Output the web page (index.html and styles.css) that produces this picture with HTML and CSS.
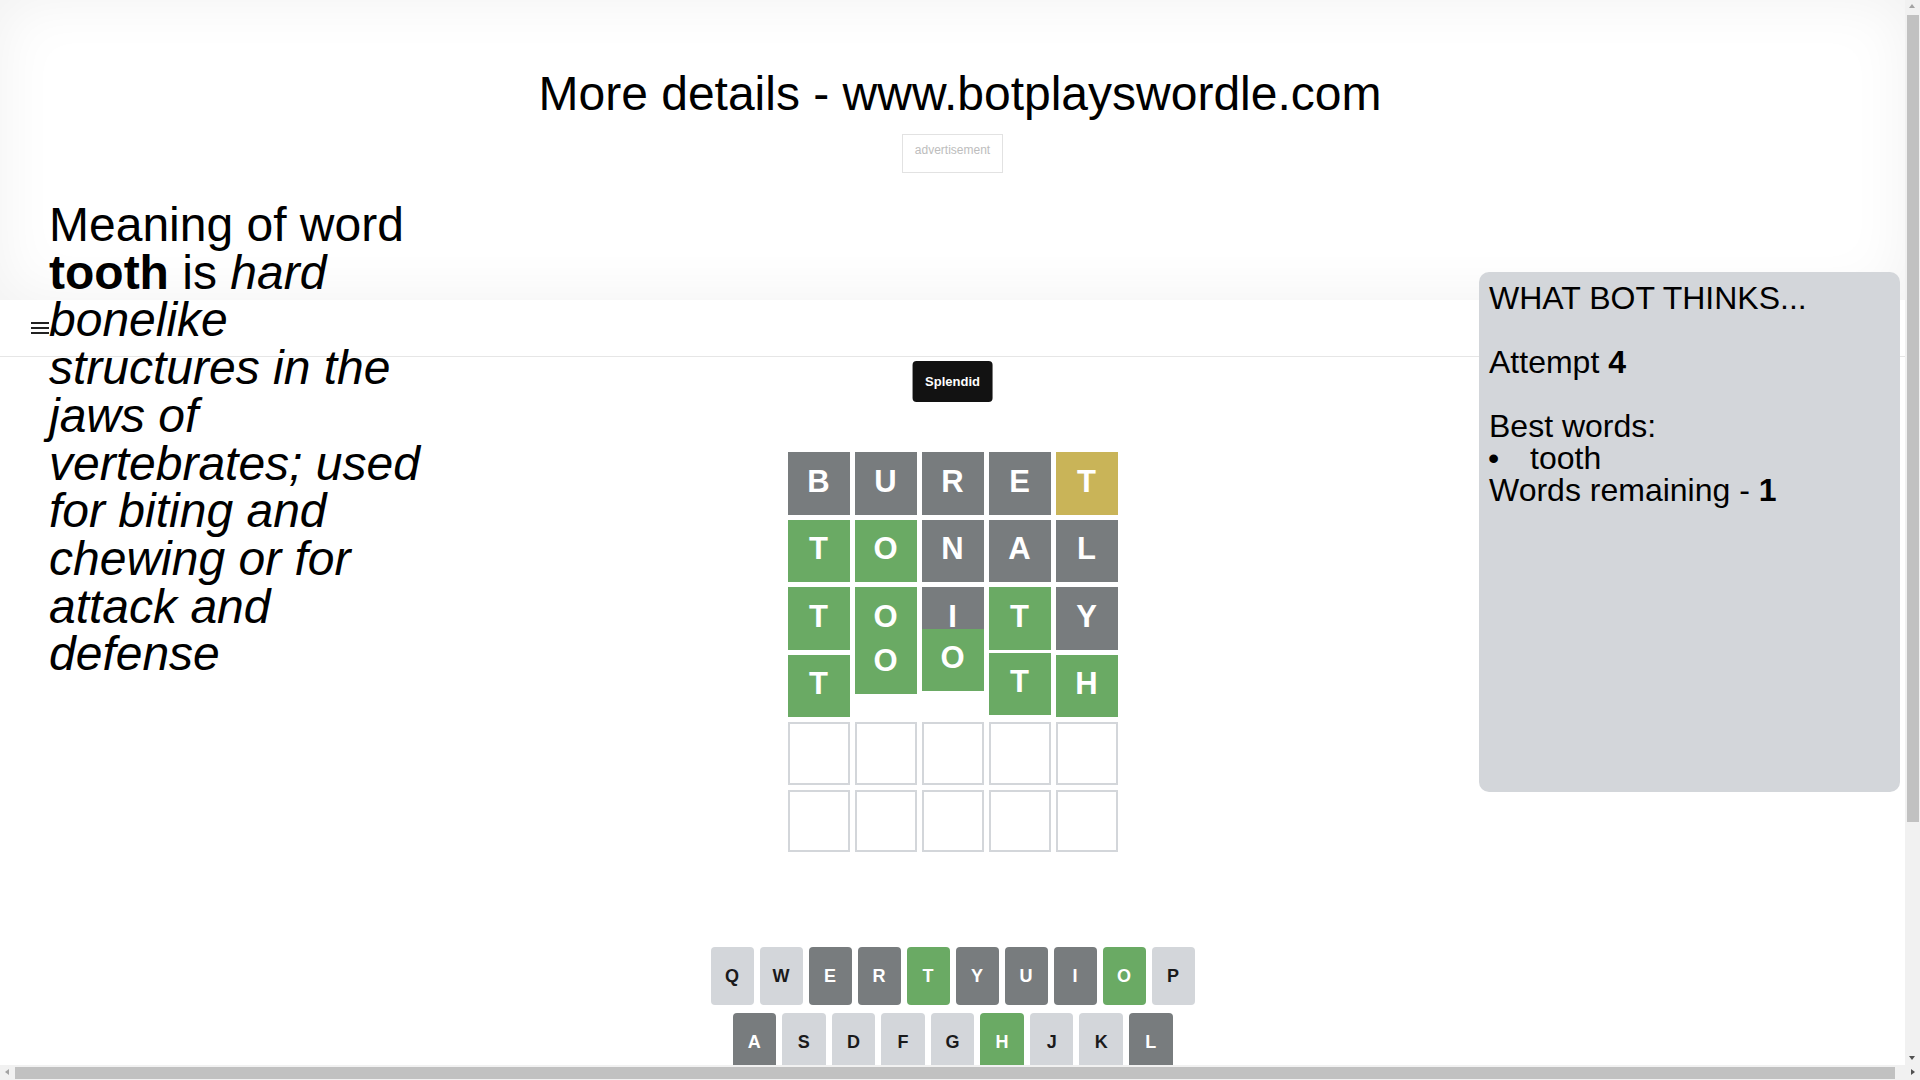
FILE: index.html
```html
<!DOCTYPE html>
<html lang="en">
<head>
  <meta charset="UTF-8" />
  <meta name="viewport" content="width=device-width, initial-scale=1" />
  <title>Bot plays Wordle</title>
  <link rel="stylesheet" href="styles.css">
</head>
<body>

  <div class="page">

    <div class="banner">
      <h1 class="site-title">More details - www.botplayswordle.com</h1>
      <div class="ad">advertisement</div>
    </div>

    <div class="game">
      <header class="game-header">
        <button class="menu-btn" aria-label="menu">
          <svg width="18" height="12" viewBox="0 0 18 12">
            <rect x="0" y="0" width="18" height="2" fill="#222" />
            <rect x="0" y="5" width="18" height="2" fill="#222" />
            <rect x="0" y="10" width="18" height="2" fill="#222" />
          </svg>
        </button>
      </header>

      <div class="board-wrap">
        <div class="board">
          <div class="board-row">
            <div class="tile absent">B</div>
            <div class="tile absent">U</div>
            <div class="tile absent">R</div>
            <div class="tile absent">E</div>
            <div class="tile present">T</div>
          </div>
          <div class="board-row">
            <div class="tile correct">T</div>
            <div class="tile correct">O</div>
            <div class="tile absent">N</div>
            <div class="tile absent">A</div>
            <div class="tile absent">L</div>
          </div>
          <div class="board-row">
            <div class="tile correct">T</div>
            <div class="tile correct">O</div>
            <div class="tile absent">I</div>
            <div class="tile correct">T</div>
            <div class="tile absent">Y</div>
          </div>
          <div class="board-row">
            <div class="tile correct">T</div>
            <div class="tile correct jump-2">O</div>
            <div class="tile correct jump-3">O</div>
            <div class="tile correct jump-4">T</div>
            <div class="tile correct">H</div>
          </div>
          <div class="board-row">
            <div class="tile empty"></div>
            <div class="tile empty"></div>
            <div class="tile empty"></div>
            <div class="tile empty"></div>
            <div class="tile empty"></div>
          </div>
          <div class="board-row">
            <div class="tile empty"></div>
            <div class="tile empty"></div>
            <div class="tile empty"></div>
            <div class="tile empty"></div>
            <div class="tile empty"></div>
          </div>
        </div>
      </div>

      <div class="keyboard">
        <div class="key-row">
          <button class="key">q</button>
          <button class="key">w</button>
          <button class="key absent">e</button>
          <button class="key absent">r</button>
          <button class="key correct">t</button>
          <button class="key absent">y</button>
          <button class="key absent">u</button>
          <button class="key absent">i</button>
          <button class="key correct">o</button>
          <button class="key">p</button>
        </div>
        <div class="key-row middle">
          <button class="key absent">a</button>
          <button class="key">s</button>
          <button class="key">d</button>
          <button class="key">f</button>
          <button class="key">g</button>
          <button class="key correct">h</button>
          <button class="key">j</button>
          <button class="key">k</button>
          <button class="key absent">l</button>
        </div>
        <div class="key-row">
          <button class="key wide">enter</button>
          <button class="key">z</button>
          <button class="key">x</button>
          <button class="key">c</button>
          <button class="key">v</button>
          <button class="key absent">b</button>
          <button class="key absent">n</button>
          <button class="key">m</button>
          <button class="key wide">⌫</button>
        </div>
      </div>
    </div>

    <div class="toast">Splendid</div>

    <div class="meaning">
      Meaning of word <b>tooth</b> is <i>hard bonelike structures in the jaws of vertebrates; used for biting and chewing or for attack and defense</i>
    </div>

    <aside class="bot-panel">
      <div class="bot-title">WHAT BOT THINKS...</div>
      <div class="bot-attempt">Attempt <b>4</b></div>
      <div class="bot-best">Best words:</div>
      <ul class="bot-list">
        <li>tooth</li>
      </ul>
      <div>Words remaining - <b>1</b></div>
    </aside>

  </div>

  <!-- window scrollbars -->
  <div class="scrollbar-v">
    <span class="arrow arrow-up"></span>
    <div class="thumb"></div>
    <span class="arrow arrow-down"></span>
  </div>
  <div class="scrollbar-h">
    <span class="arrow arrow-left"></span>
    <div class="thumb"></div>
    <span class="arrow arrow-right"></span>
  </div>

</body>
</html>
```

FILE: styles.css
```css
* {
  box-sizing: border-box;
}
html, body {
  overflow: hidden;
}
body {
  margin: 0;
  font-family: "Liberation Sans", Arial, sans-serif;
  color: #000;
  background: #fff;
}
.page {
  position: relative;
  width: 1905px;
  height: 1065px;
  overflow: hidden;
}

/* top banner */
.banner {
  height: 300px;
  padding-top: 66px;
  text-align: center;
  background: #fff;
  box-shadow: inset 0 0 60px rgba(0, 0, 0, 0.06);
}
.site-title {
  margin: 0;
  padding-left: 15px;
  font-size: 48px;
  font-weight: normal;
  line-height: normal;
}
.ad {
  display: inline-block;
  margin-top: 13px;
  padding: 8px 12px 15px;
  border: 1px solid #e2e2e2;
  color: #bdbdbd;
  font-size: 12px;
  line-height: normal;
  background: #fff;
}

/* game */
.game {
  background: #fff;
}
.game-header {
  height: 57px;
  display: flex;
  align-items: center;
  padding-left: 31px;
  border-bottom: 1px solid #e6e6e6;
}
.menu-btn {
  border: none;
  background: none;
  padding: 0;
  display: flex;
}
.board-wrap {
  padding-top: 85px;
  display: flex;
  justify-content: center;
}
.board {
  width: 350px;
  height: 420px;
  padding: 10px;
  display: grid;
  grid-template-rows: repeat(6, 1fr);
  gap: 5px;
}
.board-row {
  display: grid;
  grid-template-columns: repeat(5, 1fr);
  gap: 5px;
}
.tile {
  display: flex;
  align-items: center;
  justify-content: center;
  padding-bottom: 4px;
  font-size: 31px;
  font-weight: bold;
  line-height: 1;
  color: #fff;
  text-transform: uppercase;
}
.tile.absent {
  background: #787c7e;
}
.tile.present {
  background: #c9b458;
}
.tile.correct {
  background: #6aaa64;
}
.tile.empty {
  border: 2px solid #d3d6da;
  background: #fff;
}
/* tiles caught mid-bounce */
.tile.jump-2 {
  transform: translateY(-23px);
}
.tile.jump-3 {
  transform: translateY(-26px);
}
.tile.jump-4 {
  transform: translateY(-2px);
}

.keyboard {
  width: 484px;
  margin: 85px auto 0;
}
.key-row {
  display: flex;
  gap: 6px;
  margin-bottom: 8px;
}
.key-row.middle {
  padding: 0 22px;
}
.key {
  flex: 1;
  height: 58px;
  border: none;
  border-radius: 4px;
  padding: 0;
  background: #d3d6da;
  color: #1a1a1b;
  font-family: inherit;
  font-size: 18px;
  font-weight: bold;
  text-transform: uppercase;
  display: flex;
  align-items: center;
  justify-content: center;
}
.key.wide {
  flex: 1.5;
  font-size: 12px;
}
.key.absent {
  background: #787c7e;
  color: #fff;
}
.key.correct {
  background: #6aaa64;
  color: #fff;
}

/* overlays */
.toast {
  position: absolute;
  top: 361px;
  left: 50%;
  transform: translateX(-50%);
  padding: 13px;
  background: #121212;
  color: #fff;
  font-size: 13px;
  font-weight: bold;
  line-height: 15px;
  border-radius: 4px;
}
.meaning {
  position: absolute;
  top: 201px;
  left: 49px;
  width: 390px;
  font-size: 48px;
  line-height: 47.7px;
}
.bot-panel {
  position: absolute;
  top: 272px;
  left: 1479px;
  width: 421px;
  height: 520px;
  padding: 10px 10px;
  background: #d3d6da;
  border-radius: 10px;
  font-size: 32px;
  line-height: 32px;
}
.bot-attempt {
  margin-top: 32px;
}
.bot-best {
  margin-top: 32px;
}
.bot-list {
  margin: 0;
  padding-left: 41px;
  list-style: none;
}
.bot-list li {
  position: relative;
}
.bot-list li::before {
  content: "•";
  position: absolute;
  left: -42px;
}

/* scrollbars */
.scrollbar-v {
  position: fixed;
  top: 0;
  right: 0;
  width: 15px;
  height: 1065px;
  background: #f1f1f1;
}
.scrollbar-v .thumb {
  position: absolute;
  top: 15px;
  left: 2px;
  width: 12px;
  height: 807px;
  background: #c1c1c1;
}
.scrollbar-h {
  position: fixed;
  left: 0;
  bottom: 0;
  width: 100%;
  height: 15px;
  background: #f1f1f1;
}
.scrollbar-h .thumb {
  position: absolute;
  top: 2px;
  left: 15px;
  width: 1880px;
  height: 12px;
  background: #c1c1c1;
}
.arrow {
  position: absolute;
  width: 0;
  height: 0;
}
.arrow-up {
  top: 4px;
  left: 4px;
  border-left: 3.5px solid transparent;
  border-right: 3.5px solid transparent;
  border-bottom: 4px solid #a3a3a3;
}
.arrow-down {
  top: 1056px;
  left: 4px;
  border-left: 3.5px solid transparent;
  border-right: 3.5px solid transparent;
  border-top: 4px solid #505050;
}
.arrow-left {
  top: 4px;
  left: 5px;
  border-top: 3.5px solid transparent;
  border-bottom: 3.5px solid transparent;
  border-right: 4px solid #a3a3a3;
}
.arrow-right {
  top: 4px;
  right: 5px;
  border-top: 3.5px solid transparent;
  border-bottom: 3.5px solid transparent;
  border-left: 4px solid #505050;
}
```
